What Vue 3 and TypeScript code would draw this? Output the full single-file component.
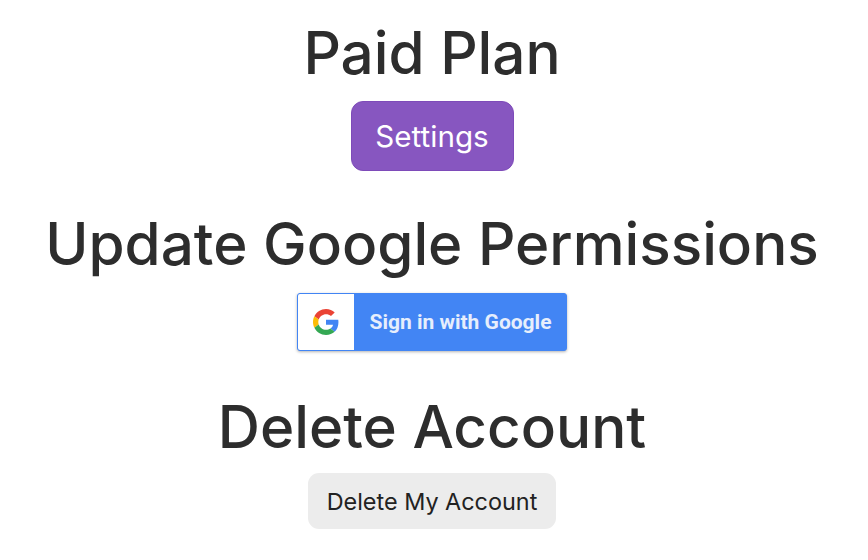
<script setup lang="ts">
const title = 'Paid Plan'
</script>

<template>
  <div class="account-page">
    <h1 class="first">{{ title }}</h1>
    <button class="settings-btn">Settings</button>

    <h1 class="google-title">Update Google Permissions</h1>
    <button class="google-btn">
      <span class="google-icon">
        <svg width="26" height="26" viewBox="0 0 48 48">
          <path fill="#EA4335" d="M24 9.5c3.54 0 6.71 1.22 9.21 3.6l6.85-6.85C35.9 2.38 30.47 0 24 0 14.62 0 6.51 5.38 2.56 13.22l7.98 6.19C12.43 13.72 17.74 9.5 24 9.5z" />
          <path fill="#4285F4" d="M46.98 24.55c0-1.57-.15-3.09-.38-4.55H24v9.02h12.94c-.58 2.96-2.26 5.48-4.78 7.18l7.73 6c4.51-4.18 7.09-10.36 7.09-17.65z" />
          <path fill="#FBBC05" d="M10.53 28.59c-.48-1.45-.76-2.99-.76-4.59s.27-3.14.76-4.59l-7.98-6.19C.92 16.46 0 20.12 0 24c0 3.88.92 7.54 2.56 10.78l7.97-6.19z" />
          <path fill="#34A853" d="M24 48c6.48 0 11.93-2.13 15.89-5.81l-7.73-6c-2.15 1.45-4.92 2.3-8.16 2.3-6.26 0-11.57-4.22-13.47-9.91l-7.98 6.19C6.51 42.62 14.62 48 24 48z" />
        </svg>
      </span>
      <span class="google-label">Sign in with Google</span>
    </button>

    <h1 class="delete-title">Delete Account</h1>
    <button class="delete-btn">Delete My Account</button>
  </div>
</template>

<style scoped>
.account-page {
  box-sizing: border-box;
  width: 868px;
  height: 560px;
  padding-right: 4px;
  overflow: hidden;
  display: flex;
  flex-direction: column;
  align-items: center;
  font-family: Inter, "Liberation Sans", sans-serif;
  color: #2d2d2d;
  background: #fff;
}

h1 {
  margin: 0;
  font-size: 58.4px;
  font-weight: 500;
  line-height: 68px;
  white-space: nowrap;
}

.first {
  margin-top: 19px;
}

.settings-btn {
  margin-top: 14px;
  width: 163px;
  height: 70px;
  background: #8756c0;
  border: 1px solid #7e4bb9;
  border-radius: 12px;
  color: #fff;
  font-family: inherit;
  font-size: 29.6px;
  font-weight: 400;
}

.google-title {
  margin-top: 39px;
}

.google-btn {
  margin-top: 15px;
  width: 270px;
  height: 58px;
  padding: 0;
  display: flex;
  align-items: stretch;
  background: #4285f4;
  border: 1px solid #4285f4;
  border-radius: 3px;
  box-shadow: 0 1px 3px rgba(0, 0, 0, 0.3);
}

.google-icon {
  width: 56px;
  background: #fff;
  border-radius: 2px 0 0 2px;
  display: flex;
  align-items: center;
  justify-content: center;
}

.google-label {
  flex: 1;
  align-self: center;
  text-align: center;
  padding-left: 1px;
  color: #e6eefc;
  font-family: Roboto, "Liberation Sans", sans-serif;
  font-size: 21px;
  font-weight: 700;
}

.delete-title {
  margin-top: 42px;
}

.delete-btn {
  margin-top: 12px;
  width: 248px;
  height: 56px;
  background: #ececec;
  border: none;
  border-radius: 11px;
  color: #222;
  font-family: inherit;
  font-size: 23.4px;
  font-weight: 400;
}
</style>
